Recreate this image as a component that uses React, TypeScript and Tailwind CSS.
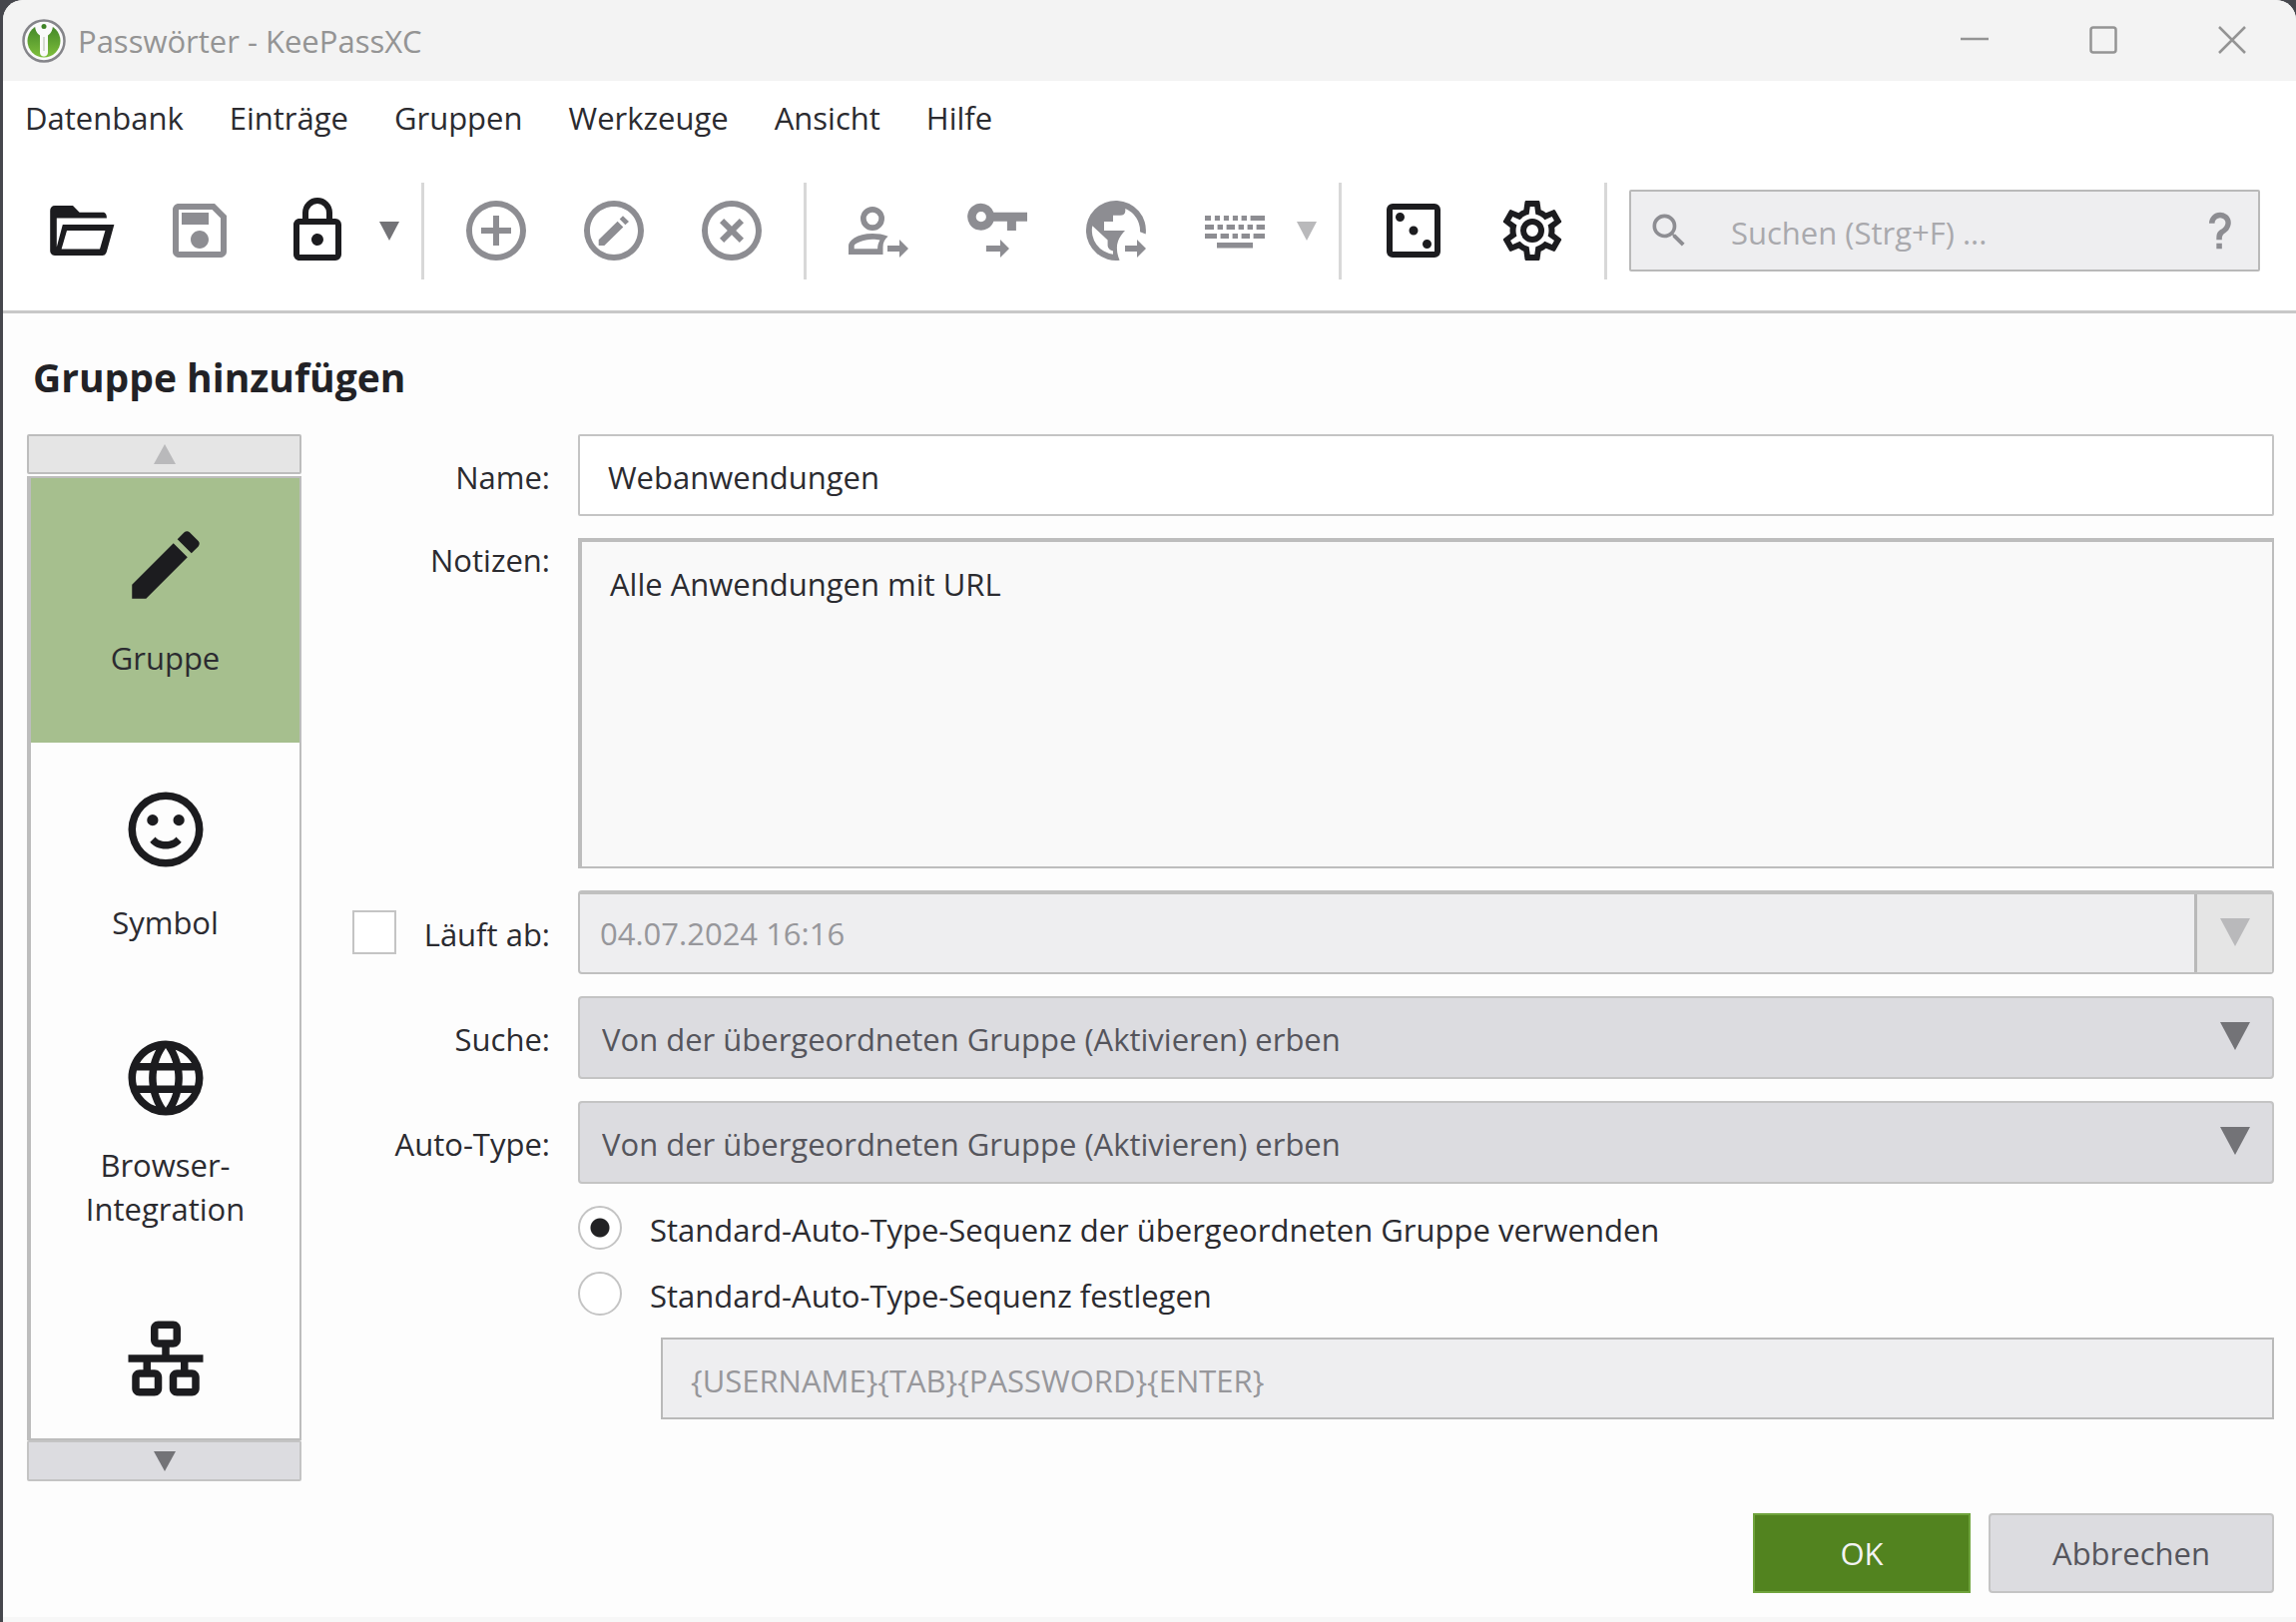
import { useState } from 'react';
import type { ReactNode } from 'react';

// Icons live on a 24x24 grid
const PATHS = {
    folder: 'M3 3.7H9L11.2 5.9H19C20 5.9 20.3 6.8 20.3 7.8H3.6V17.5L5.6 10H22.8L20.3 19C20.1 19.8 19.7 20.3 18.8 20.3H3C2 20.3 1.4 19.6 1.4 18.7V5.3C1.4 4.4 2 3.7 3 3.7ZM7 12L5.2 18.2H18L19.8 12Z',
    save: 'M17 3H5C3.89 3 3 3.9 3 5V19C3 20.1 3.89 21 5 21H19C20.1 21 21 20.1 21 19V7L17 3M19 19H5V5H16.17L19 7.83V19M12 12C10.34 12 9 13.34 9 15S10.34 18 12 18 15 16.66 15 15 13.66 12 12 12M6 6H15V10H6V6Z',
    lock: 'M12,17C10.89,17 10,16.1 10,15C10,13.89 10.89,13 12,13A2,2 0 0,1 14,15A2,2 0 0,1 12,17M18,20V10H6V20H18M18,8A2,2 0 0,1 20,10V20A2,2 0 0,1 18,22H6C4.89,22 4,21.1 4,20V10C4,8.89 4.89,8 6,8H7V6A5,5 0 0,1 12,1A5,5 0 0,1 17,6V8H18M12,3A3,3 0 0,0 9,6V8H15V6A3,3 0 0,0 12,3Z',
    add: 'M12,20C7.59,20 4,16.41 4,12C4,7.59 7.59,4 12,4C16.41,4 20,7.59 20,12C20,16.41 16.41,20 12,20M12,2A10,10 0 0,0 2,12A10,10 0 0,0 12,22A10,10 0 0,0 22,12A10,10 0 0,0 12,2M13,7H11V11H7V13H11V17H13V13H17V11H13V7Z',
    edit: 'M12,20C7.59,20 4,16.41 4,12C4,7.59 7.59,4 12,4C16.41,4 20,7.59 20,12C20,16.41 16.41,20 12,20M12,2A10,10 0 0,0 2,12A10,10 0 0,0 12,22A10,10 0 0,0 22,12A10,10 0 0,0 12,2M6.9 15.1L13.2 8.9L15.1 10.8L8.8 17H6.9ZM13.9 8.2L15 7.1L17 9L15.8 10.1Z',
    remove: 'M12,20C7.59,20 4,16.41 4,12C4,7.59 7.59,4 12,4C16.41,4 20,7.59 20,12C20,16.41 16.41,20 12,20M12,2A10,10 0 0,0 2,12A10,10 0 0,0 12,22A10,10 0 0,0 22,12A10,10 0 0,0 12,2M14.6 8L12 10.6L9.4 8L8 9.4L10.6 12L8 14.6L9.4 16L12 13.4L14.6 16L16 14.6L13.4 12L16 9.4L14.6 8Z',
    user: 'M10 4A4 4 0 0 0 10 12A4 4 0 0 0 10 4M10 5.9A2.1 2.1 0 0 1 10 10.1A2.1 2.1 0 0 1 10 5.9M10 13C4.67 13 2 15.5 2 17V20H13.5V17.5C13.5 16 14.1 14.8 15.2 13.9C13.6 13.2 11.8 13 10 13M10 14.9C11 14.9 11.8 15 12.5 15.2C12 16 11.7 17 11.7 18.1H3.9V17C3.9 16.36 7 14.9 10 14.9ZM15 17H19V15L22 18L19 21V19H15Z',
    key: 'M6.6 2.9A4.5 4.5 0 1 0 10.8 8.9H15.3V12H18.3V8.9H22V5.9H10.8A4.5 4.5 0 0 0 6.6 2.9M6.6 5.7A1.7 1.7 0 0 1 6.6 9.1A1.7 1.7 0 0 1 6.6 5.7ZM8.3 17H13V15L16 18L13 21V19H8.3Z',
    earth: 'M13.2 21.9A10 10 0 1 1 21.9 13.2L20 12.4A8 8 0 0 0 15.1 4.7V5.4C15.1 6.4 14.4 6.9 13.4 6.9H11V9H8V12H15C13.5 13.5 12.3 15.5 12.3 17.8C12.3 19.5 12.7 20.8 13.2 21.9ZM4.1 10.4L9.2 15.2V16.8C9.2 17.9 10 18.5 11 18.8V19.9A8 8 0 0 1 4.1 10.4ZM15 17H19V15L22 18L19 21V19H15Z',
    keyboard: 'M2 7H4V8.7H2ZM5.3 7H7V8.7H5.3ZM8.3 7H10V8.7H8.3ZM11.3 7H13V8.7H11.3ZM14.2 7H16V8.7H14.2ZM17.2 7H22V8.7H17.2ZM2 10H5V11.7H2ZM6.2 10H8V11.7H6.2ZM9.2 10H12V11.7H9.2ZM13.2 10H15V11.7H13.2ZM16.2 10H18V11.7H16.2ZM19.2 10H22V11.7H19.2ZM2 13H6V14.7H2ZM7.2 13H10V14.7H7.2ZM11.2 13H13V14.7H11.2ZM14.2 13H17V14.7H14.2ZM18.2 13H22V14.7H18.2ZM6 16H18V17.8H6Z',
    dice: 'M5 3H19A2 2 0 0 1 21 5V19A2 2 0 0 1 19 21H5A2 2 0 0 1 3 19V5A2 2 0 0 1 5 3M5 5V19H19V5ZM7.5 6A1.5 1.5 0 0 1 7.5 9A1.5 1.5 0 0 1 7.5 6M12 10.5A1.5 1.5 0 0 1 12 13.5A1.5 1.5 0 0 1 12 10.5M16.5 15A1.5 1.5 0 0 1 16.5 18A1.5 1.5 0 0 1 16.5 15',
    cog: 'M12,8A4,4 0 0,1 16,12A4,4 0 0,1 12,16A4,4 0 0,1 8,12A4,4 0 0,1 12,8M12,10A2,2 0 0,0 10,12A2,2 0 0,0 12,14A2,2 0 0,0 14,12A2,2 0 0,0 12,10M10,22C9.75,22 9.54,21.82 9.5,21.58L9.13,18.93C8.5,18.68 7.96,18.34 7.44,17.94L4.95,18.95C4.73,19.03 4.46,18.95 4.34,18.73L2.34,15.27C2.21,15.05 2.27,14.78 2.46,14.63L4.57,12.97L4.5,12L4.57,11L2.46,9.37C2.27,9.22 2.21,8.95 2.34,8.73L4.34,5.27C4.46,5.05 4.73,4.96 4.95,5.05L7.44,6.05C7.96,5.66 8.5,5.32 9.13,5.07L9.5,2.42C9.54,2.18 9.75,2 10,2H14C14.25,2 14.46,2.18 14.5,2.42L14.87,5.07C15.5,5.32 16.04,5.66 16.56,6.05L19.05,5.05C19.27,4.96 19.54,5.05 19.66,5.27L21.66,8.73C21.79,8.95 21.73,9.22 21.54,9.37L19.43,11L19.5,12L19.43,13L21.54,14.63C21.73,14.78 21.79,15.05 21.66,15.27L19.66,18.73C19.54,18.95 19.27,19.04 19.05,18.95L16.56,17.95C16.04,18.34 15.5,18.68 14.87,18.93L14.5,21.58C14.46,21.82 14.25,22 14,22H10M11.25,4L10.88,6.61C9.68,6.86 8.62,7.5 7.85,8.39L5.44,7.35L4.69,8.65L6.8,10.2C6.4,11.37 6.4,12.64 6.8,13.8L4.68,15.36L5.43,16.66L7.86,15.62C8.63,16.5 9.68,17.14 10.87,17.38L11.24,20H12.76L13.13,17.39C14.32,17.14 15.37,16.5 16.14,15.62L18.57,16.66L19.32,15.36L17.2,13.81C17.6,12.64 17.6,11.37 17.2,10.2L19.31,8.65L18.56,7.35L16.15,8.39C15.38,7.5 14.32,6.86 13.12,6.62L12.75,4H11.25Z',
    search: 'M9.5,3A6.5,6.5 0 0,1 16,9.5C16,11.11 15.41,12.59 14.44,13.73L14.71,14H15.5L20.5,19L19,20.5L14,15.5V14.71L13.73,14.44C12.59,15.41 11.11,16 9.5,16A6.5,6.5 0 0,1 3,9.5A6.5,6.5 0 0,1 9.5,3M9.5,5C7,5 5,7 5,9.5C5,12 7,14 9.5,14C12,14 14,12 14,9.5C14,7 12,5 9.5,5Z',
    help: 'M10,19H13V22H10V19M12,2C17.35,2.22 19.68,7.62 16.5,11.67C15.67,12.67 14.33,13.33 13.67,14.17C13,15 13,16 13,17H10C10,15.33 10,13.92 10.67,12.92C11.33,11.92 12.67,11.33 13.5,10.67C15.92,8.43 15.32,5.26 12,5A3,3 0 0,0 9,8H6A6,6 0 0,1 12,2Z',
    pencil: 'M20.71,7.04C21.1,6.65 21.1,6 20.71,5.63L18.37,3.29C18,2.9 17.35,2.9 16.96,3.29L15.12,5.12L18.87,8.87M3,17.25V21H6.75L17.81,9.93L14.06,6.18L3,17.25Z',
    smiley: 'M12 2A10 10 0 0 0 12 22A10 10 0 0 0 12 2M12 4A8 8 0 0 1 12 20A8 8 0 0 1 12 4M12 17.23C10.25 17.23 8.71 16.5 7.81 15.42L9.23 14C9.68 14.72 10.75 15.23 12 15.23C13.25 15.23 14.32 14.72 14.77 14L16.19 15.42C15.29 16.5 13.75 17.23 12 17.23M8.5 8A1.5 1.5 0 0 1 8.5 11A1.5 1.5 0 0 1 8.5 8M15.5 8A1.5 1.5 0 0 1 15.5 11A1.5 1.5 0 0 1 15.5 8',
    web: 'M16.36,14C16.44,13.34 16.5,12.68 16.5,12C16.5,11.32 16.44,10.66 16.36,10H19.74C19.9,10.64 20,11.31 20,12C20,12.69 19.9,13.36 19.74,14M14.59,19.56C15.19,18.45 15.65,17.25 15.97,16H18.92C17.96,17.65 16.43,18.93 14.59,19.56M14.34,14H9.66C9.56,13.34 9.5,12.68 9.5,12C9.5,11.32 9.56,10.65 9.66,10H14.34C14.43,10.65 14.5,11.32 14.5,12C14.5,12.68 14.43,13.34 14.34,14M12,19.96C11.17,18.76 10.5,17.43 10.09,16H13.91C13.5,17.43 12.83,18.76 12,19.96M8,8H5.08C6.03,6.34 7.57,5.06 9.4,4.44C8.8,5.55 8.35,6.75 8,8M5.08,16H8C8.35,17.25 8.8,18.45 9.4,19.56C7.57,18.93 6.03,17.65 5.08,16M4.26,14C4.1,13.36 4,12.69 4,12C4,11.31 4.1,10.64 4.26,10H7.64C7.56,10.66 7.5,11.32 7.5,12C7.5,12.68 7.56,13.34 7.64,14M12,4.03C12.83,5.23 13.5,6.57 13.91,8H10.09C10.5,6.57 11.17,5.23 12,4.03M18.92,8H15.97C15.65,6.75 15.19,5.55 14.59,4.44C16.43,5.07 17.96,6.34 18.92,8M12,2C6.47,2 2,6.5 2,12A10,10 0 0,0 12,22A10,10 0 0,0 22,12A10,10 0 0,0 12,2Z',
    lan: 'M10,2C8.89,2 8,2.89 8,4V7C8,8.11 8.89,9 10,9H11V11H2V13H6V15H5C3.89,15 3,15.89 3,17V20C3,21.11 3.89,22 5,22H9C10.11,22 11,21.11 11,20V17C11,15.89 10.11,15 9,15H8V13H16V15H15C13.89,15 13,15.89 13,17V20C13,21.11 13.89,22 15,22H19C20.11,22 21,21.11 21,20V17C21,15.89 20.11,15 19,15H18V13H22V11H13V9H14C15.11,9 16,8.11 16,7V4C16,2.89 15.11,2 14,2H10M10,4H14V7H10V4M5,17H9V20H5V17M15,17H19V20H15V17Z',
};

type IconName = keyof typeof PATHS;

function Icon({ name, className }: { name: IconName; className: string }) {
    return (
        <svg viewBox="0 0 24 24" className={`shrink-0 ${className}`} fill="currentColor" fillRule="evenodd" aria-hidden="true">
            <path d={PATHS[name]} />
        </svg>
    );
}

function Triangle({ className }: { className: string }) {
    return (
        <svg viewBox="0 0 20 18" preserveAspectRatio="none" className={`shrink-0 ${className}`} fill="currentColor" aria-hidden="true">
            <path d="M0 0H20L10 18Z" />
        </svg>
    );
}

function Logo() {
    return (
        <svg viewBox="0 0 44 44" className="w-11 h-11" aria-hidden="true">
            <defs>
                <linearGradient id="logo-green" x1="0" y1="0" x2="0" y2="1">
                    <stop offset="0" stopColor="#3f8426" />
                    <stop offset="1" stopColor="#7fbf3c" />
                </linearGradient>
            </defs>
            <circle cx="22" cy="22" r="20.5" fill="#fafafa" stroke="#85858a" strokeWidth="2.5" />
            <circle cx="22" cy="22" r="16.5" fill="url(#logo-green)" />
            <path d="M13 5H31C31 11 29.5 14 26 16.5V33C26 36.5 24 37.5 22 37.5S18 36.5 18 33V16.5C14.5 14 13 11 13 5Z" fill="#fafafa" />
            <path d="M22 18V32" stroke="#c9cfc5" strokeWidth="1.5" />
            <circle cx="22" cy="7.5" r="2.5" fill="#3f8426" />
        </svg>
    );
}

function ToolButton({ icon, label, disabled = false }: { icon: IconName; label: string; disabled?: boolean }) {
    return (
        <button type="button" aria-label={label} disabled={disabled} className="text-[#1c1c1f] disabled:text-[#8d8d92]">
            <Icon name={icon} className="w-[72px] h-[72px]" />
        </button>
    );
}

const Separator = () => <div className="w-[3px] h-[97px] shrink-0 bg-[#d8d8d8]" />;

const MENU = ['Datenbank', 'Einträge', 'Gruppen', 'Werkzeuge', 'Ansicht', 'Hilfe'];

function TitleBar() {
    return (
        <header className="flex items-center h-[81px] pl-[19px] pr-[50px] bg-[#f3f3f3] text-[#949494]">
            <Logo />
            <span className="ml-3">Passwörter - KeePassXC</span>
            <div className="ml-auto flex gap-[101px] pb-[2px]">
                <button type="button" aria-label="Minimieren">
                    <svg viewBox="0 0 28 28" className="w-7 h-7" stroke="currentColor" strokeWidth="2.5" fill="none"><path d="M0 13H28" /></svg>
                </button>
                <button type="button" aria-label="Maximieren">
                    <svg viewBox="0 0 28 28" className="w-7 h-7" stroke="currentColor" strokeWidth="2.5" fill="none"><rect x="1.5" y="1.5" width="25" height="25" rx="2.5" /></svg>
                </button>
                <button type="button" aria-label="Schließen">
                    <svg viewBox="0 0 28 28" className="w-7 h-7" stroke="currentColor" strokeWidth="2.5" fill="none"><path d="M1 1L27 27M27 1L1 27" /></svg>
                </button>
            </div>
        </header>
    );
}

function Toolbar() {
    return (
        <div className="flex items-center h-[157px] pl-[43px] pr-9 pb-[6px] bg-white border-b-3 border-[#c8c8c8]">
            <div className="flex gap-[46px]">
                <ToolButton icon="folder" label="Datenbank öffnen" />
                <ToolButton icon="save" label="Speichern" disabled />
                <ToolButton icon="lock" label="Sperren" />
            </div>
            <button type="button" aria-label="Sperroptionen" className="ml-[26px] mr-[22px] text-[#737377]">
                <Triangle className="w-5 h-[19px]" />
            </button>
            <Separator />
            <div className="flex gap-[46px] mx-9">
                <ToolButton icon="add" label="Eintrag hinzufügen" disabled />
                <ToolButton icon="edit" label="Eintrag bearbeiten" disabled />
                <ToolButton icon="remove" label="Eintrag löschen" disabled />
            </div>
            <Separator />
            <div className="flex gap-[47px] ml-9">
                <ToolButton icon="user" label="Benutzername kopieren" disabled />
                <ToolButton icon="key" label="Passwort kopieren" disabled />
                <ToolButton icon="earth" label="URL kopieren" disabled />
                <ToolButton icon="keyboard" label="Auto-Type ausführen" disabled />
            </div>
            <button type="button" disabled aria-label="Auto-Type-Optionen" className="ml-[26px] mr-[22px] text-[#b9b9bb]">
                <Triangle className="w-5 h-[19px]" />
            </button>
            <Separator />
            <div className="flex gap-[47px] mx-9">
                <ToolButton icon="dice" label="Passwortgenerator" />
                <ToolButton icon="cog" label="Einstellungen" />
            </div>
            <Separator />
            <div className="flex flex-1 min-w-0 items-center h-[82px] ml-[22px] px-4 border-2 border-[#b9b9b9] rounded-xs bg-[#eeeef0] text-[#8d8d92]">
                <Icon name="search" className="w-11 h-11" />
                <input
                    type="search"
                    aria-label="Suchen"
                    placeholder="Suchen (Strg+F) ..."
                    className="flex-1 min-w-0 ml-10 pt-1 outline-none placeholder:text-[#a9a9ad] placeholder:opacity-100"
                />
                <button type="button" aria-label="Suchhilfe"><Icon name="help" className="w-11 h-11" /></button>
            </div>
        </div>
    );
}

function Sidebar() {
    return (
        <nav className="flex flex-col w-[275px] shrink-0">
            <button type="button" disabled aria-label="Nach oben" className="flex items-center justify-center h-10 border-2 border-[#bdbdbd] rounded-xs bg-[#e5e5e5] text-[#b9b9bb]">
                <Triangle className="w-[22px] h-5 rotate-180" />
            </button>
            <div className="flex flex-col mt-[2px] border-l-4 border-r-2 border-y-2 border-[#bdbdbd] text-[#2b2b30] leading-[44px]">
                <button type="button" className="flex flex-col items-center gap-[26px] h-[265px] pt-[42px] bg-[#a6bf8e]">
                    <Icon name="pencil" className="w-[90px] h-[90px] text-[#1c1c1f]" />
                    Gruppe
                </button>
                <button type="button" className="flex flex-col items-center gap-[26px] h-[249px] pt-[42px]">
                    <Icon name="smiley" className="w-[90px] h-[90px] text-[#1c1c1f]" />
                    Symbol
                </button>
                <button type="button" className="flex flex-col items-center gap-5 h-[281px] pt-[42px]">
                    <Icon name="web" className="w-[90px] h-[90px] text-[#1c1c1f]" />
                    <span>Browser-<br />Integration</span>
                </button>
                <button type="button" aria-label="KeeShare" className="flex flex-col items-center h-[167px] pt-[42px]">
                    <Icon name="lan" className="w-[90px] h-[90px] text-[#1c1c1f]" />
                </button>
            </div>
            <button type="button" aria-label="Nach unten" className="flex items-center justify-center h-[41px] border-2 border-[#c4c4c4] rounded-xs bg-[#dcdce0] text-[#737377]">
                <Triangle className="w-[22px] h-5" />
            </button>
        </nav>
    );
}

function InheritSelect({ id }: { id: string }) {
    return (
        <div className="relative">
            <select id={id} className="block w-full h-[83px] px-[22px] pt-[2px] appearance-none border-2 border-[#c4c4c4] rounded-sm bg-[#dcdce0] text-[#55555c]">
                <option>Von der übergeordneten Gruppe (Aktivieren) erben</option>
                <option>Aktivieren</option>
                <option>Deaktivieren</option>
            </select>
            <Triangle className="absolute right-6 top-[26px] w-[30px] h-7 text-[#737377] pointer-events-none" />
        </div>
    );
}

function Label({ htmlFor, children }: { htmlFor: string; children: ReactNode }) {
    return <label htmlFor={htmlFor} className="flex items-center justify-end h-[82px] pt-1">{children}</label>;
}

export default function App() {
    const [name, setName] = useState('Webanwendungen');
    const [notes, setNotes] = useState('Alle Anwendungen mit URL');
    const [expires, setExpires] = useState(false);
    const [sequence, setSequence] = useState<'inherit' | 'custom'>('inherit');

    const radio = 'appearance-none w-11 h-11 shrink-0 rounded-full border-2 border-[#c4c4c4] bg-white checked:bg-[radial-gradient(circle,#222224_9px,#ffffff_10px)]';

    return (
        <div className="min-h-screen flex flex-col pl-[3px] bg-[#46474d] font-['Open_Sans','Noto_Sans',sans-serif] text-[31px] leading-[44px] text-[#2b2b30]">
            <div className="flex-1 flex flex-col rounded-t-[20px] overflow-hidden bg-[#fdfdfd]">
                <TitleBar />
                <nav className="flex items-center gap-[46px] h-[76px] px-[22px] pb-[2px] bg-white">
                    {MENU.map((item) => (
                        <button key={item} type="button">{item}</button>
                    ))}
                </nav>
                <Toolbar />

                <form className="flex-1 flex flex-col pt-[42px] pl-6 pr-[22px] pb-6" onSubmit={(e) => e.preventDefault()}>
                    <h1 className="pl-[6px] mb-[35px] text-[39px] font-bold text-[#222226]">Gruppe hinzufügen</h1>

                    <div className="flex gap-[51px]">
                        <Sidebar />
                        <div className="flex-1 min-w-0 grid grid-cols-[198px_minmax(0,1fr)] gap-x-7 gap-y-[22px] content-start">
                            <Label htmlFor="name">Name:</Label>
                            <input id="name" value={name} onChange={(e) => setName(e.target.value)} className="h-[82px] px-7 pt-1 border-2 border-[#c4c4c4] rounded-xs bg-white outline-none" />

                            <label htmlFor="notes" className="text-right">Notizen:</label>
                            <textarea id="notes" value={notes} onChange={(e) => setNotes(e.target.value)} className="block h-[331px] px-7 py-5 resize-none border-2 border-t-4 border-l-4 border-[#bdbdbd] bg-[#f9f9f9] outline-none" />

                            <div className="flex items-center justify-between h-[84px]">
                                <input id="expires" type="checkbox" checked={expires} onChange={(e) => setExpires(e.target.checked)} className="appearance-none w-11 h-11 border-2 border-[#c4c4c4] bg-white checked:bg-[#a6bf8e]" />
                                <label htmlFor="expires" className="pt-1">Läuft ab:</label>
                            </div>
                            <div className="flex h-[84px] border-2 border-t-4 border-[#c0c0c0] rounded-sm bg-[#eeeef0] text-[#97979b]">
                                <input aria-label="Ablaufdatum" disabled={!expires} defaultValue="04.07.2024 16:16" className="flex-1 min-w-0 px-5 outline-none" />
                                <button type="button" disabled={!expires} aria-label="Kalender" className="flex items-center justify-center w-[78px] pb-[2px] border-l-3 border-[#b9b9b9] bg-[#e5e5e5] text-[#b9b9bb]">
                                    <Triangle className="w-[30px] h-7" />
                                </button>
                            </div>

                            <Label htmlFor="search">Suche:</Label>
                            <InheritSelect id="search" />

                            <Label htmlFor="autotype">Auto-Type:</Label>
                            <InheritSelect id="autotype" />

                            <div className="col-start-2 flex flex-col gap-[22px]">
                                <label className="flex items-center h-11 gap-7">
                                    <input type="radio" name="sequence" checked={sequence === 'inherit'} onChange={() => setSequence('inherit')} className={radio} />
                                    <span className="pt-1">Standard-Auto-Type-Sequenz der übergeordneten Gruppe verwenden</span>
                                </label>
                                <label className="flex items-center h-11 gap-7">
                                    <input type="radio" name="sequence" checked={sequence === 'custom'} onChange={() => setSequence('custom')} className={radio} />
                                    <span className="pt-1">Standard-Auto-Type-Sequenz festlegen</span>
                                </label>
                                <input
                                    aria-label="Auto-Type-Sequenz"
                                    disabled={sequence === 'inherit'}
                                    defaultValue="{USERNAME}{TAB}{PASSWORD}{ENTER}"
                                    className="h-[82px] ml-[83px] px-7 pt-1 border-2 border-[#b9b9b9] bg-[#eeeef0] text-[#97979b] outline-none"
                                />
                            </div>
                        </div>
                    </div>

                    <div className="flex justify-end gap-[18px] mt-8">
                        <button type="submit" className="w-[218px] h-20 border-2 border-[#6fa33c] bg-[#52831f] text-[#f3f3f3]">OK</button>
                        <button type="button" className="w-[286px] h-20 border-2 border-[#c4c4c4] rounded-sm bg-[#dcdce0] text-[#55555c]">Abbrechen</button>
                    </div>
                </form>
                <footer className="h-[6px] bg-[#f7f7f7]" />
            </div>
        </div>
    );
}
